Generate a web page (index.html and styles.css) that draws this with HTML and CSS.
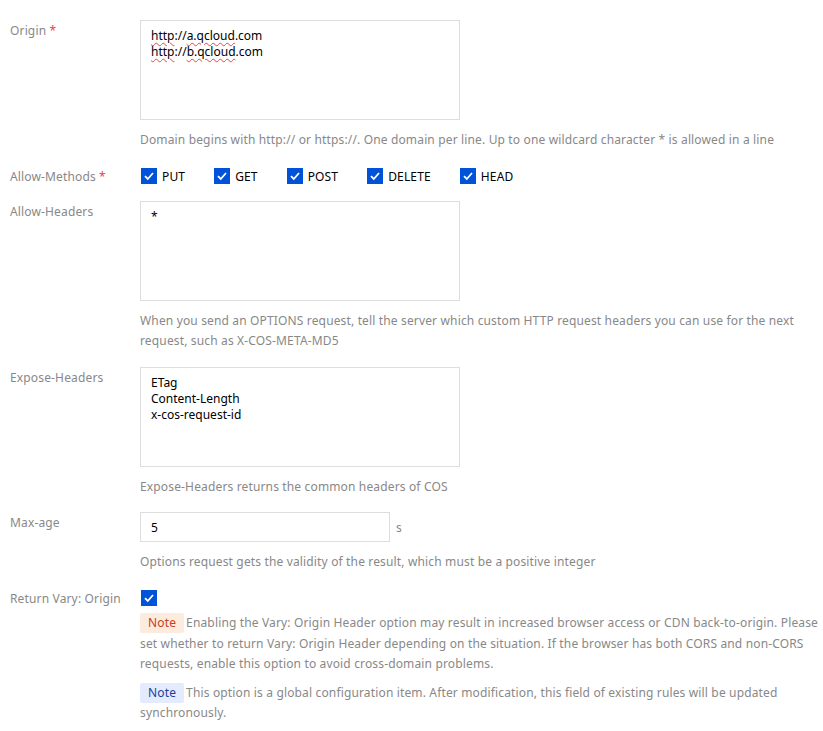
FILE: index.html
```html
<!DOCTYPE html>
<html>
<head>
<meta charset="utf-8">
<link rel="stylesheet" href="styles.css">
</head>
<body>
<form class="form">
  <div class="item">
    <div class="label">Origin <span class="req">*</span></div>
    <div class="control">
      <div class="textarea" role="textbox"><span class="spell">http</span>://<span class="spell">a.qcloud</span>.com<br><span class="spell">http</span>://<span class="spell">b.qcloud</span>.com</div>
      <div class="hint">Domain begins with http:// or https://. One domain per line. Up to one wildcard character * is allowed in a line</div>
    </div>
  </div>
  <div class="item item-methods">
    <div class="label">Allow-Methods<span class="req req-tight">*</span></div>
    <div class="control methods">
      <label class="check"><span class="box"></span>PUT</label>
      <label class="check"><span class="box"></span>GET</label>
      <label class="check"><span class="box"></span>POST</label>
      <label class="check"><span class="box"></span>DELETE</label>
      <label class="check"><span class="box"></span>HEAD</label>
    </div>
  </div>
  <div class="item">
    <div class="label">Allow-Headers</div>
    <div class="control">
      <textarea class="textarea">*</textarea>
      <div class="hint">When you send an OPTIONS request, tell the server which custom HTTP request headers you can use for the next request, such as X-COS-META-MD5</div>
    </div>
  </div>
  <div class="item item-tight">
    <div class="label">Expose-Headers</div>
    <div class="control">
      <textarea class="textarea">ETag
Content-Length
x-cos-request-id</textarea>
      <div class="hint">Expose-Headers returns the common headers of COS</div>
    </div>
  </div>
  <div class="item">
    <div class="label">Max-age</div>
    <div class="control">
      <div class="inline"><input class="input" value="5"><span class="unit">s</span></div>
      <div class="hint">Options request gets the validity of the result, which must be a positive integer</div>
    </div>
  </div>
  <div class="item">
    <div class="label">Return Vary: Origin</div>
    <div class="control">
      <div class="vary-row"><span class="box"></span></div>
      <p class="note"><span class="tag tag-warn">Note</span>Enabling the Vary: Origin Header option may result in increased browser access or CDN back-to-origin. Please set whether to return Vary: Origin Header depending on the situation. If the browser has both CORS and non-CORS requests, enable this option to avoid cross-domain problems.</p>
      <p class="note note2"><span class="tag tag-info">Note</span>This option is a global configuration item. After modification, this field of existing rules will be updated synchronously.</p>
    </div>
  </div>
</form>
</body>
</html>
```
FILE: styles.css
```css
html, body {
  margin: 0;
  padding: 0;
  background: #fff;
}
body {
  font-family: "Noto Sans", "Open Sans", sans-serif;
  font-size: 12px;
  letter-spacing: 0.15px;
  color: #000;
}
.form {
  padding: 20px 0 0 10px;
}
.item {
  display: flex;
  margin-bottom: 16px;
}
.item-tight {
  margin-bottom: 15px;
}
.item-methods {
  margin-bottom: 14px;
}
.label {
  width: 130px;
  flex: none;
  color: #888;
  line-height: 20px;
  padding-top: 1px;
}
.req {
  color: #e54545;
}
.req-tight {
  margin-left: 3px;
}
.control {
  flex: 1;
  min-width: 0;
}
.textarea {
  display: block;
  box-sizing: border-box;
  width: 320px;
  height: 100px;
  margin: 0;
  border: 1px solid #ddd;
  padding: 7px 10px 5px;
  font: inherit;
  letter-spacing: 0;
  line-height: 16px;
  color: #000;
  resize: none;
  outline: none;
  background: #fff;
}
.spell {
  text-decoration: underline wavy #e54545;
  text-decoration-thickness: 1px;
  text-underline-offset: 2px;
}
.hint {
  margin-top: 10px;
  color: #888;
  line-height: 20px;
}
.methods {
  display: flex;
  align-items: center;
  height: 20px;
}
.check {
  display: flex;
  align-items: center;
  margin-right: 28px;
  color: #000;
}
.box {
  width: 16px;
  height: 16px;
  margin: 0 5px 0 1px;
  background: #0052d9 url("data:image/svg+xml;utf8,<svg xmlns='http://www.w3.org/2000/svg' viewBox='0 0 16 16'><path d='M4 8.2 L6.8 11 L12 5' fill='none' stroke='white' stroke-width='1.8'/></svg>") center/16px no-repeat;
  flex: none;
}
.inline {
  display: flex;
  align-items: center;
}
.input {
  box-sizing: border-box;
  width: 250px;
  height: 30px;
  border: 1px solid #ddd;
  padding: 0 10px;
  font: inherit;
  color: #000;
  outline: none;
  margin: 0;
}
.unit {
  margin-left: 6px;
  color: #888;
}
.vary-row {
  height: 20px;
  display: flex;
  align-items: center;
}
.note {
  margin: 5px 0 0;
  color: #888;
  line-height: 20.5px;
}
.note2 {
  margin-top: 8px;
}
.tag {
  display: inline-block;
  padding: 0 8px;
  margin-right: 2px;
  line-height: 20px;
  border-radius: 2px;
  vertical-align: top;
}
.tag-warn {
  background: #fdebdd;
  color: #c8401a;
}
.tag-info {
  background: #e3ebfd;
  color: #1c3d9e;
}
```
